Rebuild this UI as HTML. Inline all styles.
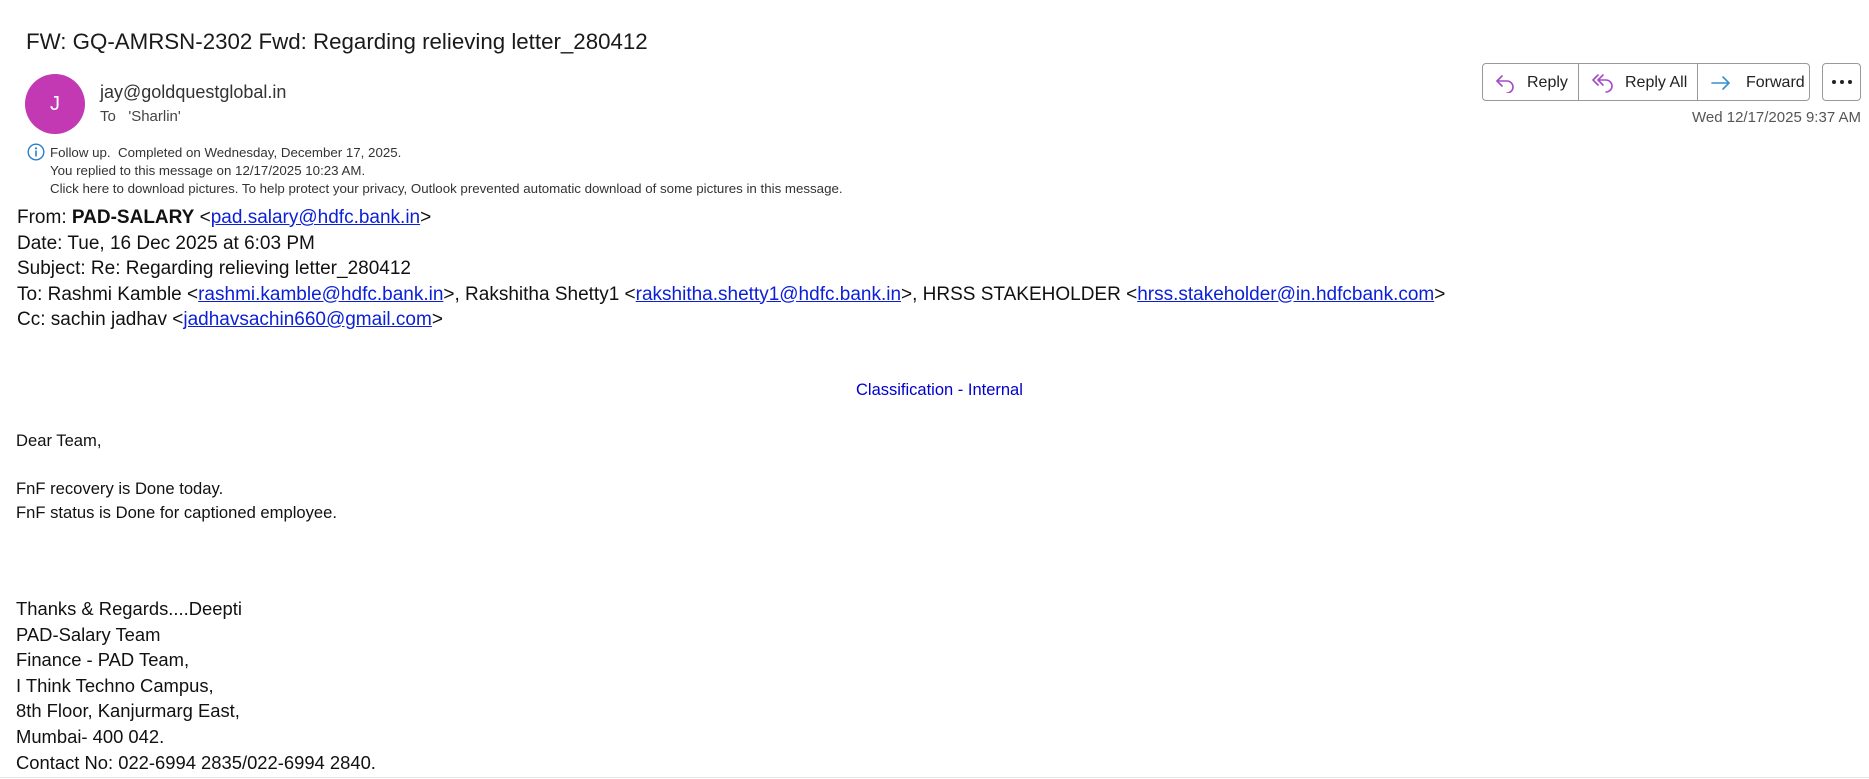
<!DOCTYPE html>
<html><head><meta charset="utf-8"><style>
*{margin:0;padding:0;box-sizing:border-box}
body{width:1869px;height:779px;background:#fff;position:relative;overflow:hidden;font-family:"Liberation Sans",sans-serif;color:#111}
.a{position:absolute;white-space:nowrap}
a{color:#0b1fd6;text-decoration:underline}
.btn{position:absolute;top:64px;height:38px;display:flex;align-items:center;font-size:16px;color:#222}
.hdr{font-size:19px;left:17px}
.body{font-size:16.6px;left:16px}
.sig{font-size:18.4px;left:16px}
</style></head><body>
<div class="a" style="left:26px;top:29px;font-size:22.3px;color:#1a1a1a">FW: GQ-AMRSN-2302 Fwd: Regarding relieving letter_280412</div>
<div class="a" style="left:25px;top:74px;width:60px;height:60px;border-radius:50%;background:#c239b3;color:#fff;font-size:20px;display:flex;align-items:center;justify-content:center">J</div>
<div class="a" style="left:100px;top:82px;font-size:18px;color:#333">jay@goldquestglobal.in</div>
<div class="a" style="left:100px;top:108px;font-size:15px;color:#444">To&nbsp;&nbsp; 'Sharlin'</div>

<div class="a" style="left:1482px;top:63px;width:328px;height:38px;border:1px solid #999;border-radius:4px"></div>
<div class="a" style="left:1578px;top:63px;width:1px;height:38px;background:#999"></div>
<div class="a" style="left:1697px;top:63px;width:1px;height:38px;background:#999"></div>
<div class="btn" style="left:1495px"><svg width="22" height="20" viewBox="0 0 22 20" fill="none" stroke="#a64ac9" stroke-width="1.6" stroke-linecap="round" stroke-linejoin="round"><path d="M7 3 L2 8 L7 13"/><path d="M2 8 H12 a6 6 0 0 1 0 12"/></svg><span style="margin-left:10px">Reply</span></div>
<div class="btn" style="left:1592px"><svg width="24" height="20" viewBox="0 0 24 20" fill="none" stroke="#a64ac9" stroke-width="1.6" stroke-linecap="round" stroke-linejoin="round"><path d="M6 2 L1 7 L6 12"/><path d="M11 2 L6 7 L11 12"/><path d="M6 7 H14 a6 6 0 0 1 0 12"/></svg><span style="margin-left:9px">Reply All</span></div>
<div class="btn" style="left:1710px"><svg width="22" height="20" viewBox="0 0 22 20" fill="none" stroke="#3a8fd0" stroke-width="1.6" stroke-linecap="round" stroke-linejoin="round"><path d="M2 10 H19"/><path d="M13 4 L19 10 L13 16"/></svg><span style="margin-left:14px">Forward</span></div>
<div class="a" style="left:1822px;top:63px;width:39px;height:38px;border:1px solid #999;border-radius:4px;display:flex;align-items:center;justify-content:center;gap:4px"><i style="width:4px;height:4px;background:#222;border-radius:50%"></i><i style="width:4px;height:4px;background:#222;border-radius:50%"></i><i style="width:4px;height:4px;background:#222;border-radius:50%"></i></div>
<div class="a" style="right:8px;top:109px;font-size:15px;color:#555">Wed 12/17/2025 9:37 AM</div>

<svg class="a" style="left:27px;top:143px" width="18" height="18" viewBox="0 0 18 18"><circle cx="9" cy="9" r="7.8" fill="none" stroke="#2a7fc9" stroke-width="1.4"/><circle cx="9" cy="5.3" r="1.1" fill="#2a7fc9"/><rect x="8.2" y="7.5" width="1.6" height="6" fill="#2a7fc9"/></svg>
<div class="a" style="left:50px;top:144px;font-size:13.3px;color:#333;line-height:18px">Follow up.&nbsp; Completed on Wednesday, December 17, 2025.<br>You replied to this message on 12/17/2025 10:23 AM.<br>Click here to download pictures. To help protect your privacy, Outlook prevented automatic download of some pictures in this message.</div>

<div class="a hdr" style="top:205px;line-height:25.5px">From: <b>PAD-SALARY</b> &lt;<a>pad.salary@hdfc.bank.in</a>&gt;<br>Date: Tue, 16 Dec 2025 at 6:03 PM<br>Subject: Re: Regarding relieving letter_280412<br>To: Rashmi Kamble &lt;<a>rashmi.kamble@hdfc.bank.in</a>&gt;, Rakshitha Shetty1 &lt;<a>rakshitha.shetty1@hdfc.bank.in</a>&gt;, HRSS STAKEHOLDER &lt;<a>hrss.stakeholder@in.hdfcbank.com</a>&gt;<br>Cc: sachin jadhav &lt;<a>jadhavsachin660@gmail.com</a>&gt;</div>

<div class="a" style="left:856px;top:381px;font-size:16.5px;color:#0000cc">Classification - Internal</div>
<div class="a body" style="top:431px">Dear Team,</div>
<div class="a body" style="top:477px;line-height:24px">FnF recovery is Done today.<br>FnF status is Done for captioned employee.</div>
<div class="a sig" style="top:596px;line-height:25.6px">Thanks &amp; Regards....Deepti<br>PAD-Salary Team<br>Finance - PAD Team,<br>I Think Techno Campus,<br>8th Floor, Kanjurmarg East,<br>Mumbai- 400 042.<br>Contact No: 022-6994 2835/022-6994 2840.</div>
<div class="a" style="left:0;top:777px;width:1869px;height:1px;background:#e6e6e6"></div>
</body></html>
